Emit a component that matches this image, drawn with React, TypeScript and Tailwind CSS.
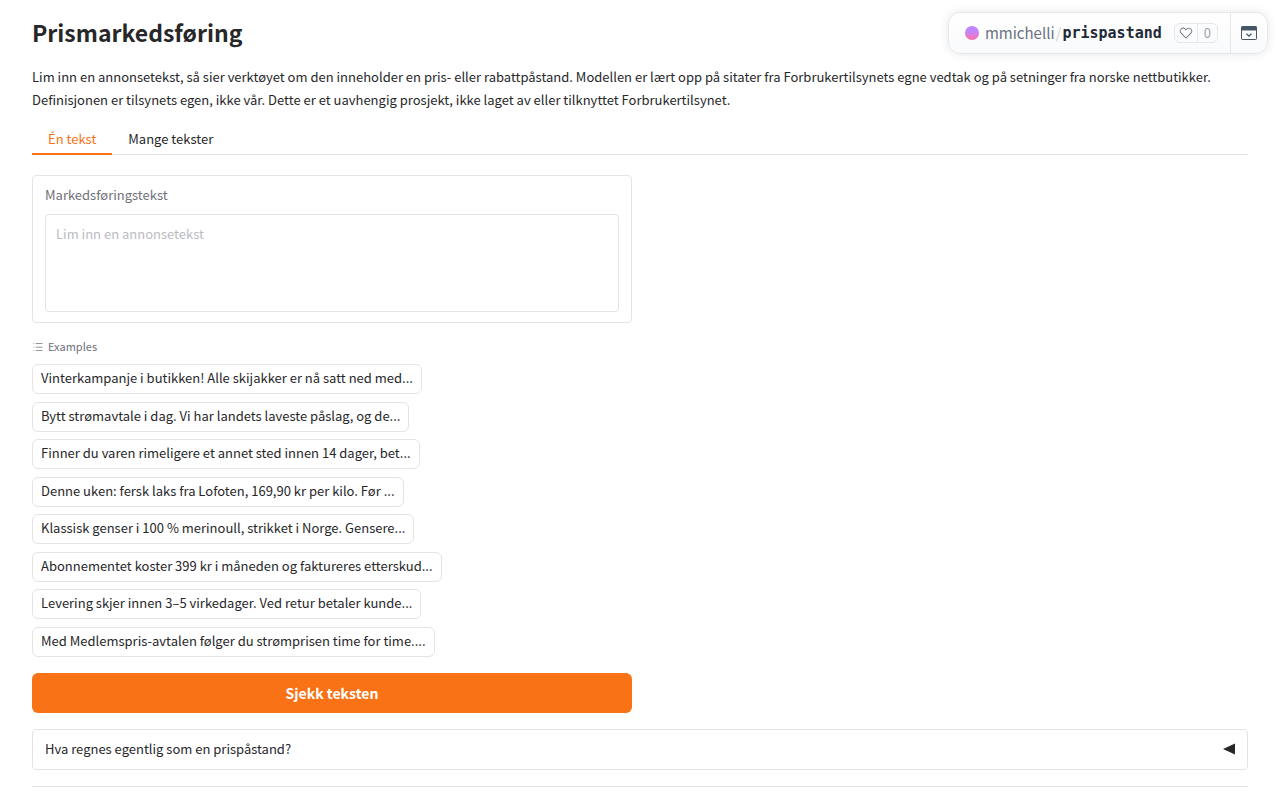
import { useState } from "react";

const examples = [
  "Vinterkampanje i butikken! Alle skijakker er nå satt ned med...",
  "Bytt strømavtale i dag. Vi har landets laveste påslag, og de...",
  "Finner du varen rimeligere et annet sted innen 14 dager, bet...",
  "Denne uken: fersk laks fra Lofoten, 169,90 kr per kilo. Før ...",
  "Klassisk genser i 100 % merinoull, strikket i Norge. Gensere...",
  "Abonnementet koster 399 kr i måneden og faktureres etterskud...",
  "Levering skjer innen 3–5 virkedager. Ved retur betaler kunde...",
  "Med Medlemspris-avtalen følger du strømprisen time for time....",
];

function SpaceHeader() {
  return (
    <div className="absolute top-3 right-3 flex h-[42px] items-stretch rounded-xl border border-[#e5e7eb] bg-linear-to-b from-white to-[#f9fafb] text-[15px] leading-6 shadow-[0_0_10px_rgba(0,0,0,0.1)]">
      <div className="flex items-center pr-3 pl-4">
        <span className="mr-1.5 size-3.5 rounded-full bg-linear-to-b from-[#c084fc] from-35% to-[#f472b6] to-90%" />
        <a href="#owner" className="text-[#6b7280]">mmichelli</a>
        <span className="px-px text-[#d1d5db]">/</span>
        <a href="#space" className="font-['DejaVu_Sans_Mono',monospace] font-bold text-[#1f2937]">prispastand</a>
        <div className="ml-3 flex h-5 items-stretch rounded-md border border-[#e5e7eb] text-[13px]">
          <button type="button" aria-label="Lik" className="flex items-center px-1 text-[#6b7280]">
            <svg width="14" height="14" viewBox="0 0 32 32" fill="currentColor">
              <path d="M22.45,6a5.47,5.47,0,0,1,3.91,1.64,5.7,5.7,0,0,1,0,8L16,26.13,5.64,15.64a5.7,5.7,0,0,1,0-8,5.48,5.48,0,0,1,7.82,0L16,10.24l2.53-2.58A5.44,5.44,0,0,1,22.45,6m0-2a7.47,7.47,0,0,0-5.34,2.24L16,7.36,14.89,6.24a7.49,7.49,0,0,0-10.68,0,7.72,7.72,0,0,0,0,10.82L16,29,27.79,17.06a7.72,7.72,0,0,0,0-10.82A7.49,7.49,0,0,0,22.45,4Z" />
            </svg>
          </button>
          <button type="button" className="flex items-center border-l border-[#e5e7eb] px-1.5 text-[#9ca3af]">0</button>
        </div>
      </div>
      <button type="button" aria-label="Vis meny" className="flex w-[37px] items-center justify-center border-l border-[#e5e7eb]">
        <svg width="16" height="14" viewBox="0 0 16 14" fill="none">
          <rect x="0.5" y="0.5" width="15" height="13" rx="0.8" stroke="#475569" />
          <path d="M0.5 0.5h15v4h-15z" fill="#475569" />
          <path d="m5.5 7.8 2.5 2.4 2.5-2.4" stroke="#475569" strokeWidth="1.3" />
        </svg>
      </button>
    </div>
  );
}

export default function App() {
  const [text, setText] = useState("");
  const [open, setOpen] = useState(false);

  return (
    <div className="relative bg-white px-8 pt-4 font-['Noto_Sans_CJK_JP',sans-serif] text-[13px] leading-5 text-[#27272a]">
      <SpaceHeader />
      <main className="flex flex-col">
        <h1 className="text-[23px] leading-8 font-bold">Prismarkedsføring</h1>
        <p className="mt-[17px] leading-[23px]">
          Lim inn en annonsetekst, så sier verktøyet om den inneholder en pris- eller rabattpåstand. Modellen er lært
          opp på sitater fra Forbrukertilsynets egne vedtak og på setninger fra norske nettbutikker. Definisjonen er
          tilsynets egen, ikke vår. Dette er et uavhengig prosjekt, ikke laget av eller tilknyttet Forbrukertilsynet.
        </p>
        <div role="tablist" className="mt-[13px] flex h-[31px] border-b border-[#e4e4e7]">
          <button type="button" role="tab" aria-selected="true" className="-mb-px border-b-2 border-[#f97316] px-4 text-[#f97316]">
            Én tekst
          </button>
          <button type="button" role="tab" aria-selected="false" className="px-4">
            Mange tekster
          </button>
        </div>

        <div className="mt-5 grid grid-cols-2 gap-4">
          <div className="flex flex-col gap-4">
            <div className="flex flex-col rounded-sm border border-[#e4e4e7] px-3 pt-2 pb-2.5">
              <label htmlFor="ad" className="mb-[9px] leading-[21px] text-[#71717a]">Markedsføringstekst</label>
              <textarea
                id="ad"
                value={text}
                onChange={(e) => setText(e.target.value)}
                placeholder="Lim inn en annonsetekst"
                className="h-[98px] w-full resize-none rounded-sm border border-[#e4e4e7] px-2.5 py-[9px] outline-none placeholder:text-[#bbbbc2]"
              />
            </div>
            <section>
              <h2 className="mb-[11px] flex items-center gap-1 text-[11px] leading-[14px] text-[#71717a]">
                <svg width="12" height="12" viewBox="0 0 32 32" fill="currentColor" className="mt-0.5">
                  <path d="M10 6h18v2H10zm0 18h18v2H10zm0-9h18v2H10zm-6 0h2v2H4zm0-9h2v2H4zm0 18h2v2H4z" />
                </svg>
                Examples
              </h2>
              <div className="flex min-h-[293px] flex-col items-start justify-between">
                {examples.map((item) => (
                  <button
                    key={item}
                    type="button"
                    onClick={() => setText(item)}
                    className="h-[30px] rounded-md border border-[#e4e4e7] px-2 pb-0.5 whitespace-nowrap"
                  >
                    {item}
                  </button>
                ))}
              </div>
            </section>
            <button type="button" className="h-10 rounded-md bg-[#f97316] text-[14px] font-bold text-white">
              Sjekk teksten
            </button>
          </div>
        </div>

        <div className="mt-4 rounded-sm border border-[#e4e4e7]">
          <button
            type="button"
            aria-expanded={open}
            onClick={() => setOpen(!open)}
            className="flex h-[39px] w-full items-center justify-between px-3 pb-0.5"
          >
            <span>Hva regnes egentlig som en prispåstand?</span>
            <svg width="12" height="12" viewBox="0 0 12 12" fill="currentColor">
              <path d="M0 6 12 0.5v11z" />
            </svg>
          </button>
        </div>
        <hr className="mt-4 border-[#e4e4e7]" />
      </main>
    </div>
  );
}
